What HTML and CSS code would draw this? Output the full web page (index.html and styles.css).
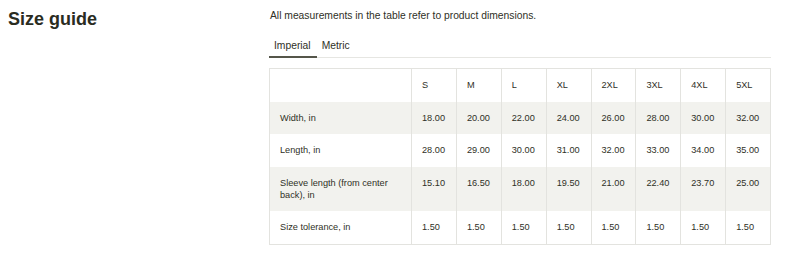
FILE: index.html
```html
<!DOCTYPE html>
<html lang="en">
<head>
<meta charset="utf-8">
<title>Size guide</title>
<link rel="stylesheet" href="styles.css">
</head>
<body>
<div class="page">
  <h2 class="title">Size guide</h2>
  <div class="content">
    <p class="intro">All measurements in the table refer to product dimensions.</p>
    <div class="tabs">
      <span class="tab active">Imperial</span>
      <span class="tab">Metric</span>
    </div>
    <table class="sizes">
      <colgroup><col class="c-label"><col><col><col><col><col><col><col><col></colgroup>
      <thead>
        <tr><th></th><th>S</th><th>M</th><th>L</th><th>XL</th><th>2XL</th><th>3XL</th><th>4XL</th><th>5XL</th></tr>
      </thead>
      <tbody>
        <tr><td>Width, in</td><td>18.00</td><td>20.00</td><td>22.00</td><td>24.00</td><td>26.00</td><td>28.00</td><td>30.00</td><td>32.00</td></tr>
        <tr><td>Length, in</td><td>28.00</td><td>29.00</td><td>30.00</td><td>31.00</td><td>32.00</td><td>33.00</td><td>34.00</td><td>35.00</td></tr>
        <tr><td>Sleeve length (from center back), in</td><td>15.10</td><td>16.50</td><td>18.00</td><td>19.50</td><td>21.00</td><td>22.40</td><td>23.70</td><td>25.00</td></tr>
        <tr><td>Size tolerance, in</td><td>1.50</td><td>1.50</td><td>1.50</td><td>1.50</td><td>1.50</td><td>1.50</td><td>1.50</td><td>1.50</td></tr>
      </tbody>
    </table>
  </div>
</div>
</body>
</html>
```

FILE: styles.css
```css
html, body {
  margin: 0;
  padding: 0;
  background: #ffffff;
}

body {
  font-family: "Liberation Sans", Arial, sans-serif;
  color: #2f3026;
}

.page {
  display: grid;
  grid-template-columns: 261px 502px;
  padding: 8px 0 0 8px;
}

.title {
  margin: 0;
  font-size: 18px;
  line-height: 22px;
  font-weight: 700;
  color: #2a2c1f;
}

.content {
  display: flex;
  flex-direction: column;
  align-items: stretch;
}

.intro {
  margin: 1px 0 15px 1px;
  font-size: 10.3px;
  line-height: 14px;
  color: #2f3026;
}

.tabs {
  display: flex;
  border-bottom: 1px solid #e6e6e2;
}

.tab {
  padding: 1px 5px 3px;
  font-size: 10.3px;
  line-height: 14px;
  color: #2f3026;
  border-bottom: 2px solid transparent;
  margin-bottom: -1px;
}

.tab.active {
  border-bottom-color: #55564a;
  padding-right: 6px;
}

.sizes {
  margin-top: 10px;
  width: 502px;
  border-collapse: collapse;
  table-layout: fixed;
  border: 1px solid #e3e3df;
  font-size: 9.2px;
  line-height: 12px;
  color: #2f3026;
}

.sizes .c-label {
  width: 142px;
}

.sizes th,
.sizes td {
  padding: 10px 10px 10.5px;
  text-align: left;
  vertical-align: top;
  font-weight: 400;
  border-left: 1px solid #e3e3df;
  border-right: 1px solid #e3e3df;
}

.sizes tbody tr:nth-child(odd) {
  background: #f2f2ee;
}
```
